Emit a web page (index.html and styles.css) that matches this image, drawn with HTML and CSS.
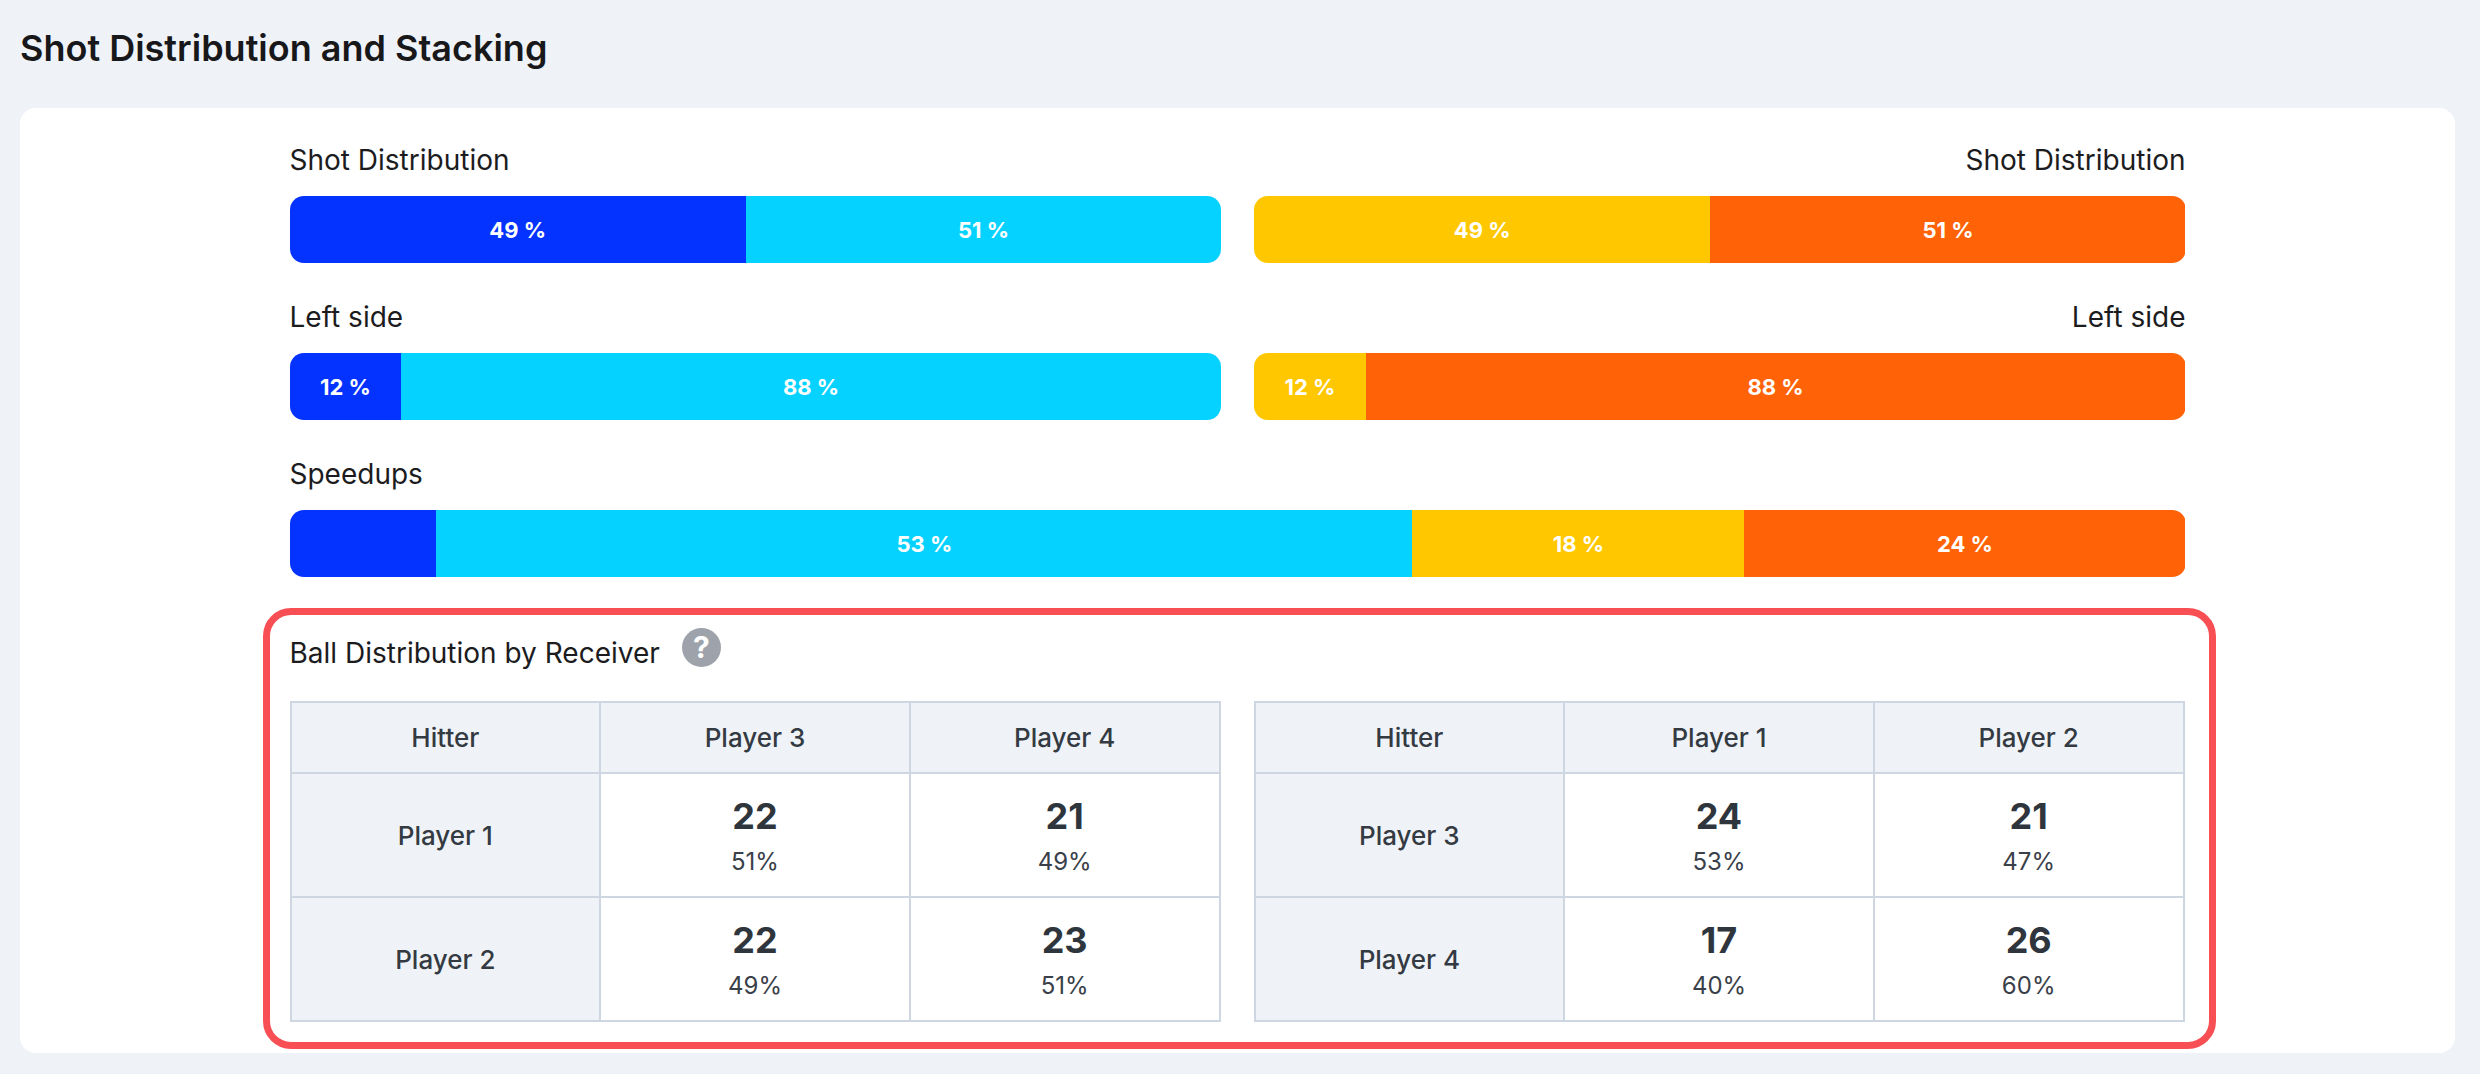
FILE: index.html
```html
<!DOCTYPE html>
<html lang="en">
<head>
<meta charset="utf-8">
<title>Shot Distribution and Stacking</title>
<link rel="stylesheet" href="styles.css">
</head>
<body>
<div class="page">
  <h1 class="page-title">Shot Distribution and Stacking</h1>
  <div class="card">
    <div class="content">
      <div class="pair">
        <div class="stat">
          <div class="stat-label">Shot Distribution</div>
          <div class="bar">
            <div class="seg blue" style="flex-basis:49%">49 %</div>
            <div class="seg cyan" style="flex-basis:51%">51 %</div>
          </div>
        </div>
        <div class="stat">
          <div class="stat-label right">Shot Distribution</div>
          <div class="bar">
            <div class="seg yellow" style="flex-basis:49%">49 %</div>
            <div class="seg orange" style="flex-basis:51%">51 %</div>
          </div>
        </div>
      </div>
      <div class="pair">
        <div class="stat">
          <div class="stat-label">Left side</div>
          <div class="bar">
            <div class="seg blue" style="flex-basis:12%">12 %</div>
            <div class="seg cyan" style="flex-basis:88%">88 %</div>
          </div>
        </div>
        <div class="stat">
          <div class="stat-label right">Left side</div>
          <div class="bar">
            <div class="seg yellow" style="flex-basis:12%">12 %</div>
            <div class="seg orange" style="flex-basis:88%">88 %</div>
          </div>
        </div>
      </div>
      <div class="stat full">
        <div class="stat-label">Speedups</div>
        <div class="bar">
          <div class="seg blue" style="flex-basis:7.75%"></div>
          <div class="seg cyan" style="flex-basis:51.48%">53 %</div>
          <div class="seg yellow" style="flex-basis:17.51%">18 %</div>
          <div class="seg orange" style="flex-basis:23.26%">24 %</div>
        </div>
      </div>

      <section class="receiver">
        <div class="receiver-head">
          <span class="receiver-title">Ball Distribution by Receiver</span>
          <span class="help">?</span>
        </div>
        <div class="tables">
          <table class="dist">
            <colgroup><col class="col"><col class="col"><col class="col"></colgroup>
            <thead>
              <tr><th>Hitter</th><th>Player 3</th><th>Player 4</th></tr>
            </thead>
            <tbody>
              <tr>
                <th>Player 1</th>
                <td><div class="num">22</div><div class="pct">51%</div></td>
                <td><div class="num">21</div><div class="pct">49%</div></td>
              </tr>
              <tr>
                <th>Player 2</th>
                <td><div class="num">22</div><div class="pct">49%</div></td>
                <td><div class="num">23</div><div class="pct">51%</div></td>
              </tr>
            </tbody>
          </table>
          <table class="dist">
            <colgroup><col class="col"><col class="col"><col class="col"></colgroup>
            <thead>
              <tr><th>Hitter</th><th>Player 1</th><th>Player 2</th></tr>
            </thead>
            <tbody>
              <tr>
                <th>Player 3</th>
                <td><div class="num">24</div><div class="pct">53%</div></td>
                <td><div class="num">21</div><div class="pct">47%</div></td>
              </tr>
              <tr>
                <th>Player 4</th>
                <td><div class="num">17</div><div class="pct">40%</div></td>
                <td><div class="num">26</div><div class="pct">60%</div></td>
              </tr>
            </tbody>
          </table>
        </div>
      </section>
    </div>
  </div>
</div>
</body>
</html>
```
FILE: styles.css
```css
* { box-sizing: border-box; }

html, body {
  margin: 0;
  padding: 0;
  background: #eff3f8;
  font-family: "Inter", "Noto Sans", "Liberation Sans", sans-serif;
  color: #1b1b1f;
}

.page {
  padding: 27px 25px 0 20px;
}

.page-title {
  margin: 0 0 38px 0;
  font-size: 36px;
  line-height: 43px;
  font-weight: 600;
  color: #18181b;
}

.card {
  background: #ffffff;
  border-radius: 16px;
  padding: 31px 0 31px 0;
}

.content {
  width: 1896px;
  margin: 0 auto;
}

.pair {
  display: flex;
  gap: 33px;
  margin-bottom: 33px;
}

.stat {
  flex: 1 1 0;
  min-width: 0;
}

.stat-label {
  font-size: 28px;
  line-height: 42px;
  font-weight: 400;
  color: #1c1c1e;
  margin-bottom: 15px;
}

.stat-label.right {
  text-align: right;
}

.bar {
  display: flex;
  height: 67px;
  border-radius: 14px;
  overflow: hidden;
}

.seg {
  flex-grow: 0;
  flex-shrink: 0;
  display: flex;
  align-items: center;
  justify-content: center;
  color: #ffffff;
  font-size: 22px;
  font-weight: 700;
  white-space: nowrap;
}

.blue { background: #0432ff; }
.cyan { background: #05d2ff; }
.yellow { background: #ffc700; }
.orange { background: #ff6207; }

.receiver {
  position: relative;
  margin-top: 55px;
}

.receiver::after {
  content: "";
  position: absolute;
  top: -24px;
  left: -27px;
  right: -30px;
  bottom: -27px;
  border: 7px solid #f74f54;
  border-radius: 28px;
  pointer-events: none;
}

.receiver-head {
  display: flex;
  align-items: flex-start;
  gap: 22px;
  margin-bottom: 27px;
}

.receiver-title {
  font-size: 28px;
  line-height: 42px;
  color: #1c1c1e;
}

.help {
  width: 39px;
  height: 39px;
  margin-top: -4px;
  border-radius: 50%;
  background: #9ea3ab;
  color: #ffffff;
  font-size: 30px;
  font-weight: 700;
  line-height: 39px;
  text-align: center;
}

.tables {
  display: flex;
  gap: 33px;
}

.dist {
  width: 931px;
  flex: 0 0 931px;
  border-collapse: collapse;
  table-layout: fixed;
  border: 2px solid #cdd6e1;
}

.dist .col {
  width: 33.333%;
}

.dist th,
.dist td {
  border: 2px solid #cdd6e1;
  text-align: center;
  vertical-align: middle;
  padding: 0;
  color: #343a42;
}

.dist th {
  background: #eff3f8;
  font-size: 26px;
  font-weight: 500;
}

.dist thead th {
  height: 71px;
}

.dist tbody th,
.dist tbody td {
  height: 124px;
}

.dist td {
  background: #ffffff;
}

.num {
  font-size: 36px;
  line-height: 44px;
  font-weight: 700;
  color: #2f353d;
  margin-bottom: 9px;
}

.pct {
  font-size: 24px;
  line-height: 30px;
  font-weight: 400;
  color: #3a4049;
}
```
